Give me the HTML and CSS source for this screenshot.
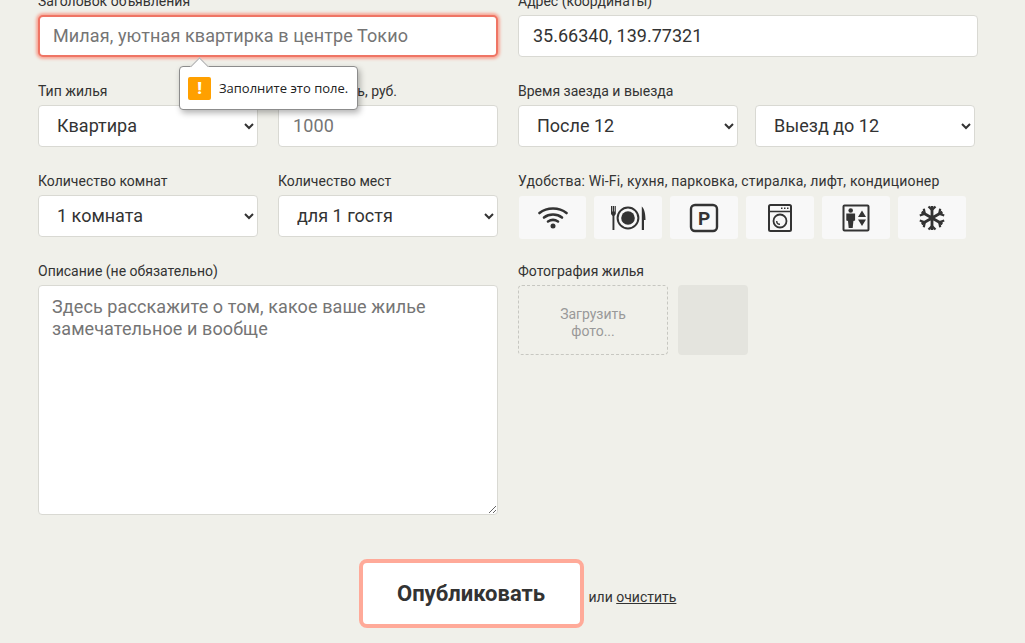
FILE: index.html
```html
<!DOCTYPE html>
<html lang="ru">
<head>
    <meta charset="UTF-8">
    <meta name="viewport" content="width=device-width, initial-scale=1.0">
    <title>Новое объявление</title>
    <link rel="stylesheet" href="styles.css">
</head>
<body>
    <form class="ad-form">
        <div class="form-columns">
            <div class="column">
                <div class="field field-title">
                    <label for="title">Заголовок объявления</label>
                    <input class="input input-error" type="text" id="title" placeholder="Милая, уютная квартирка в центре Токио">
                    <div class="tooltip">
                        <span class="tooltip-arrow"></span>
                        <span class="tooltip-icon">!</span>
                        <span>Заполните это поле.</span>
                    </div>
                </div>
                <div class="pair">
                    <div class="field">
                        <label for="type">Тип жилья</label>
                        <select class="input" id="type"><option>Квартира</option></select>
                    </div>
                    <div class="field">
                        <label class="label-price" for="price"><span>ь, руб.</span></label>
                        <input class="input" type="text" id="price" placeholder="1000">
                    </div>
                </div>
                <div class="pair">
                    <div class="field">
                        <label for="rooms">Количество комнат</label>
                        <select class="input" id="rooms"><option>1 комната</option></select>
                    </div>
                    <div class="field">
                        <label for="guests">Количество мест</label>
                        <select class="input" id="guests"><option>для 1 гостя</option></select>
                    </div>
                </div>
                <div class="field">
                    <label for="description">Описание (не обязательно)</label>
                    <textarea class="input textarea" id="description" placeholder="Здесь расскажите о том, какое ваше жилье замечательное и вообще"></textarea>
                </div>
            </div>

            <div class="column">
                <div class="field">
                    <label for="address">Адрес (координаты)</label>
                    <input class="input" type="text" id="address" value="35.66340, 139.77321">
                </div>
                <div class="field">
                    <label for="timein">Время заезда и выезда</label>
                    <div class="pair pair-time">
                        <select class="input" id="timein"><option>После 12</option></select>
                        <select class="input" id="timeout"><option>Выезд до 12</option></select>
                    </div>
                </div>
                <div class="field">
                    <label class="label-features">Удобства: Wi-Fi, кухня, парковка, стиралка, лифт, кондиционер</label>
                    <div class="features">
                        <div class="feature">
                            <svg width="30" height="23" viewBox="0 0 30 23" fill="none" stroke="#333" stroke-width="2.600" stroke-linecap="round">
                                <path d="M1.500 7C9 1 21 1 28.500 7"/>
                                <path d="M6 11.500C11 7.500 19 7.500 24 11.500"/>
                                <path d="M10 15.500C13 13.500 17 13.500 20 15.500"/>
                                <circle cx="15" cy="20" r="2.500" fill="#333" stroke="none"/>
                            </svg>
                        </div>
                        <div class="feature">
                            <svg width="35" height="24" viewBox="0 0 35 24" fill="#333">
                                <path d="M0 0h1.200v5.500h.6V0h1.200v5.500h.6V0h1.200v8L3.400 10v14H1.500V10L0 8z"/>
                                <circle cx="17" cy="12" r="10.400" fill="none" stroke="#333" stroke-width="2"/>
                                <circle cx="17" cy="12" r="6.800"/>
                                <path d="M30.800 .5C33.500 3 34.500 8 34.500 14H33v10h-2.200z"/>
                            </svg>
                        </div>
                        <div class="feature">
                            <svg width="30" height="30" viewBox="0 0 30 30">
                                <rect x="2" y="2" width="26" height="26" rx="4" fill="none" stroke="#333" stroke-width="2.400"/>
                                <text class="parking-letter" x="15" y="21.500" text-anchor="middle">P</text>
                            </svg>
                        </div>
                        <div class="feature">
                            <svg width="24" height="28" viewBox="0 0 24 28" fill="none" stroke="#333">
                                <rect x="1" y="1" width="22" height="26" rx="1.500" stroke-width="2"/>
                                <path d="M1 7.500h22" stroke-width="1.500"/>
                                <path d="M13 4.300h1.500M16 4.300h1.500M19 4.300h1.500" stroke-width="1.500"/>
                                <circle cx="12" cy="17" r="6.500" stroke-width="1.800"/>
                                <path d="M8.700 17a3.300 3.300 0 0 0 3.300 3.300" stroke-width="1.400"/>
                            </svg>
                        </div>
                        <div class="feature">
                            <svg width="28" height="28" viewBox="0 0 28 28" fill="#333">
                                <rect x="1.500" y="1.500" width="25" height="25" rx="1" fill="none" stroke="#333" stroke-width="2"/>
                                <circle cx="8.700" cy="6.500" r="2.300"/>
                                <path d="M4.300 9.500h8.800v7l-1.700.6L10.700 24H6.700l-.7-6.900-1.700-.6z"/>
                                <path d="M20 6.500l4 6.500h-8zM20 22l4-6.500h-8z"/>
                            </svg>
                        </div>
                        <div class="feature">
                            <svg width="26" height="26" viewBox="0 0 26 26" fill="none" stroke="#333" stroke-width="2.800">
                                <path d="M13 1v24M2.600 7l20.800 12M2.600 19L23.400 7"/>
                                <path d="M9.500 1.500L13 5l3.500-3.500M9.500 24.500L13 21l3.500 3.500M.8 10.500l5-1.800-1-5M25.200 10.500l-5-1.800 1-5M.8 15.500l5 1.800-1 5M25.200 15.500l-5 1.800 1 5" stroke-width="2.200"/>
                            </svg>
                        </div>
                    </div>
                </div>
                <div class="field">
                    <label>Фотография жилья</label>
                    <div class="photos">
                        <div class="upload">Загрузить<br>фото...</div>
                        <div class="photo-preview"></div>
                    </div>
                </div>
            </div>
        </div>

        <div class="form-actions">
            <button class="submit" type="submit">Опубликовать</button>
            <span class="reset-text">или <a href="#">очистить</a></span>
        </div>
    </form>
</body>
</html>
```

FILE: styles.css
```css
html, body {
    height: 100%;
}

body {
    margin: 0;
    height: 643px;
    overflow: hidden;
    background-color: #f0f0ea;
    color: #333;
    font-family: Roboto, sans-serif;
    font-size: 14px;
}

/* page is scrolled a bit, the first label is cut by the top edge */
.ad-form {
    margin-top: -7px;
    padding: 0 38px;
}

.form-columns {
    display: flex;
    gap: 20px;
}

.column {
    width: 460px;
    display: flex;
    flex-direction: column;
    gap: 26px;
}

.field {
    position: relative;
    display: flex;
    flex-direction: column;
    min-width: 0;
}

label {
    height: 16px;
    line-height: 16px;
    margin-bottom: 6px;
    white-space: nowrap;
    font-size: 14px;
    color: #333;
}

/* the start of this label sits under the tooltip */
.label-price {
    text-align: right;
    padding-right: 101px;
}

.label-features {
    letter-spacing: 0.17px;
}

.input {
    box-sizing: border-box;
    width: 100%;
    height: 42px;
    margin: 0;
    padding: 0 14px 2px;
    background-color: #fff;
    border: 1px solid #d9d9d3;
    border-radius: 4px;
    color: #333;
    font-family: Roboto, sans-serif;
    font-size: 18px;
}

.input::placeholder {
    color: #757575;
    opacity: 1;
    letter-spacing: 0.1px;
}

.input-error {
    padding: 0 13px 2px;
    border: 2px solid #ef7565;
    border-radius: 5px;
    box-shadow: 0 0 3px 2px #f7a898;
    outline: none;
}

.textarea {
    height: 230px;
    padding: 10px 13px;
    line-height: 22px;
    display: block;
}

.pair {
    display: grid;
    grid-template-columns: 220px 220px;
    gap: 20px;
}

.pair-time {
    gap: 17px;
}

.features {
    display: flex;
    gap: 8px;
    height: 41px;
    margin-top: 1px;
    padding-left: 1px;
}

.feature {
    flex: none;
    width: 68px;
    height: 43px;
    display: flex;
    align-items: center;
    justify-content: center;
    background-color: #f8f8f8;
    border-radius: 3px;
}

.feature:first-child {
    width: 67px;
}

.parking-letter {
    font-family: Roboto, sans-serif;
    font-size: 19px;
    font-weight: 700;
    fill: #333;
}

.photos {
    display: flex;
    gap: 10px;
}

.upload {
    box-sizing: border-box;
    width: 150px;
    height: 70px;
    padding-top: 5px;
    display: flex;
    align-items: center;
    justify-content: center;
    text-align: center;
    line-height: 17px;
    border: 1px dashed #c7c7c1;
    border-radius: 4px;
    color: #999;
}

.photo-preview {
    width: 70px;
    height: 70px;
    background-color: #e4e4de;
    border-radius: 4px;
}

.form-actions {
    display: flex;
    align-items: center;
    margin-top: 44px;
    padding-left: 320.5px;
}

.submit {
    box-sizing: border-box;
    width: 225px;
    height: 69px;
    background-color: #fff;
    border: 4px solid #ffaa99;
    border-radius: 8px;
    color: #333;
    font-family: Roboto, sans-serif;
    font-size: 22px;
    font-weight: 700;
}

.reset-text {
    margin-left: 5px;
    margin-top: 6px;
    color: #333;
}

.reset-text a {
    color: #333;
}

/* browser validation bubble */
.tooltip {
    position: absolute;
    top: 73px;
    left: 141px;
    z-index: 5;
    box-sizing: border-box;
    width: 179px;
    height: 44px;
    display: flex;
    align-items: center;
    gap: 8px;
    padding: 0 8px;
    background-color: #fff;
    border: 1px solid #8c8c8c;
    border-radius: 4px;
    box-shadow: 2px 3px 6px rgba(0, 0, 0, 0.3);
    color: #222;
    font-family: "Open Sans", Roboto, sans-serif;
    font-size: 13px;
    white-space: nowrap;
}

.tooltip-arrow {
    position: absolute;
    top: -7px;
    left: 13px;
    width: 12px;
    height: 12px;
    background-color: #fff;
    border-top: 1px solid #b0b0b0;
    border-left: 1px solid #b0b0b0;
    transform: rotate(45deg);
}

.tooltip-icon {
    flex: none;
    width: 23px;
    height: 23px;
    display: flex;
    align-items: center;
    justify-content: center;
    background-color: #ffa000;
    border-radius: 2px;
    color: #fff;
    font-family: Roboto, sans-serif;
    font-size: 17px;
    font-weight: 900;
}
```
